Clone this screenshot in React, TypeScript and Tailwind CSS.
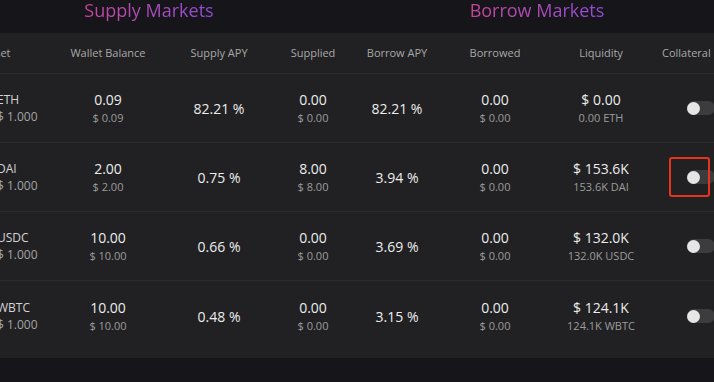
import React from "react";

type Row = {
  asset: string;
  wallet: string;
  walletUsd: string;
  supplyApy: string;
  supplied: string;
  suppliedUsd: string;
  borrowApy: string;
  borrowed: string;
  borrowedUsd: string;
  liq: string;
  liqSub: string;
  highlight?: boolean;
};

const rows: Row[] = [
  { asset: "ETH", wallet: "0.09", walletUsd: "$ 0.09", supplyApy: "82.21 %", supplied: "0.00", suppliedUsd: "$ 0.00", borrowApy: "82.21 %", borrowed: "0.00", borrowedUsd: "$ 0.00", liq: "$ 0.00", liqSub: "0.00 ETH" },
  { asset: "DAI", wallet: "2.00", walletUsd: "$ 2.00", supplyApy: "0.75 %", supplied: "8.00", suppliedUsd: "$ 8.00", borrowApy: "3.94 %", borrowed: "0.00", borrowedUsd: "$ 0.00", liq: "$ 153.6K", liqSub: "153.6K DAI", highlight: true },
  { asset: "USDC", wallet: "10.00", walletUsd: "$ 10.00", supplyApy: "0.66 %", supplied: "0.00", suppliedUsd: "$ 0.00", borrowApy: "3.69 %", borrowed: "0.00", borrowedUsd: "$ 0.00", liq: "$ 132.0K", liqSub: "132.0K USDC" },
  { asset: "WBTC", wallet: "10.00", walletUsd: "$ 10.00", supplyApy: "0.48 %", supplied: "0.00", suppliedUsd: "$ 0.00", borrowApy: "3.15 %", borrowed: "0.00", borrowedUsd: "$ 0.00", liq: "$ 124.1K", liqSub: "124.1K WBTC" },
];

function Two({ a, b }: { a: string; b: string }) {
  return (
    <div className="flex flex-col items-center gap-[1px]">
      <span className="text-[14px] leading-[18px] font-medium text-[#ececec]">{a}</span>
      <span className="text-[11px] leading-[15px] text-[#9c9c9c]">{b}</span>
    </div>
  );
}

function Toggle() {
  return (
    <div className="w-[28px] h-[14px] rounded-full bg-[#3c3c3e] flex items-center">
      <div className="w-[13px] h-[13px] ml-[0px] rounded-full bg-[#e6e6e6]" />
    </div>
  );
}

const W = {
  asset: "w-[58px]",
  wallet: "w-[106px]",
  sapy: "w-[116px]",
  supplied: "w-[72px]",
  bapy: "w-[96px]",
  borrowed: "w-[100px]",
  liq: "w-[112px]",
};

export default function App() {
  return (
    <div
      className="w-[714px] h-[382px] overflow-hidden bg-[#16161a] flex flex-col"
      style={{ fontFamily: '"Open Sans", "Liberation Sans", sans-serif' }}
    >
      <div className="h-[33px] flex items-start shrink-0 pt-[1px]">
        <div className="w-[200px] ml-[49px] text-center text-[18px] leading-[20px] -mt-[1px]">
          <span className="bg-gradient-to-r from-[#c8449a] to-[#8f4bd8] bg-clip-text text-transparent">Supply Markets</span>
        </div>
        <div className="w-[200px] ml-[188px] text-center text-[18px] leading-[20px] -mt-[1px]">
          <span className="bg-gradient-to-r from-[#c8449a] to-[#8f4bd8] bg-clip-text text-transparent">Borrow Markets</span>
        </div>
      </div>
      <div className="bg-[#212123] h-[325px] shrink-0 flex flex-col">
        <div className="h-[41px] flex items-center border-b border-[#2c2c2e] text-[11px] text-[#a8a8a8] -ml-[3px] w-[730px]">
          <div className={`${W.asset} whitespace-nowrap`}>
            <span className="inline-block -ml-[14px]">Asset</span>
          </div>
          <div className={`${W.wallet} text-center`}>Wallet Balance</div>
          <div className={`${W.sapy} text-center`}>Supply APY</div>
          <div className={`${W.supplied} text-center`}>Supplied</div>
          <div className={`${W.bapy} text-center`}>Borrow APY</div>
          <div className={`${W.borrowed} text-center`}>Borrowed</div>
          <div className={`${W.liq} text-center`}>Liquidity</div>
          <div className="pl-[5px] whitespace-nowrap">Collateral</div>
        </div>
        {rows.map((r, i) => (
          <div
            key={r.asset}
            className={`flex items-center -ml-[3px] w-[730px] ${i < 3 ? "h-[69px] border-b border-[#2c2c2e]" : "h-[70px]"}`}
          >
            <div className={`${W.asset} flex flex-col text-[12px] leading-[17px]`}>
              <span className="text-[#d4d4d4]">{r.asset}</span>
              <span className="text-[#a4a4a4]">$ 1.000</span>
            </div>
            <div className={`${W.wallet} flex justify-center`}>
              <Two a={r.wallet} b={r.walletUsd} />
            </div>
            <div className={`${W.sapy} text-center text-[14px] font-medium text-[#ececec]`}>{r.supplyApy}</div>
            <div className={`${W.supplied} flex justify-center`}>
              <Two a={r.supplied} b={r.suppliedUsd} />
            </div>
            <div className={`${W.bapy} text-center text-[14px] font-medium text-[#ececec]`}>{r.borrowApy}</div>
            <div className={`${W.borrowed} flex justify-center`}>
              <Two a={r.borrowed} b={r.borrowedUsd} />
            </div>
            <div className={`${W.liq} flex justify-center`}>
              <Two a={r.liq} b={r.liqSub} />
            </div>
            <div className="pl-[30px] relative">
              <Toggle />
              {r.highlight && (
                <div className="absolute left-[12px] -top-[13px] w-[41px] h-[40px] border-2 border-[#e8331d] rounded-[3px]" />
              )}
            </div>
          </div>
        ))}
      </div>
    </div>
  );
}
